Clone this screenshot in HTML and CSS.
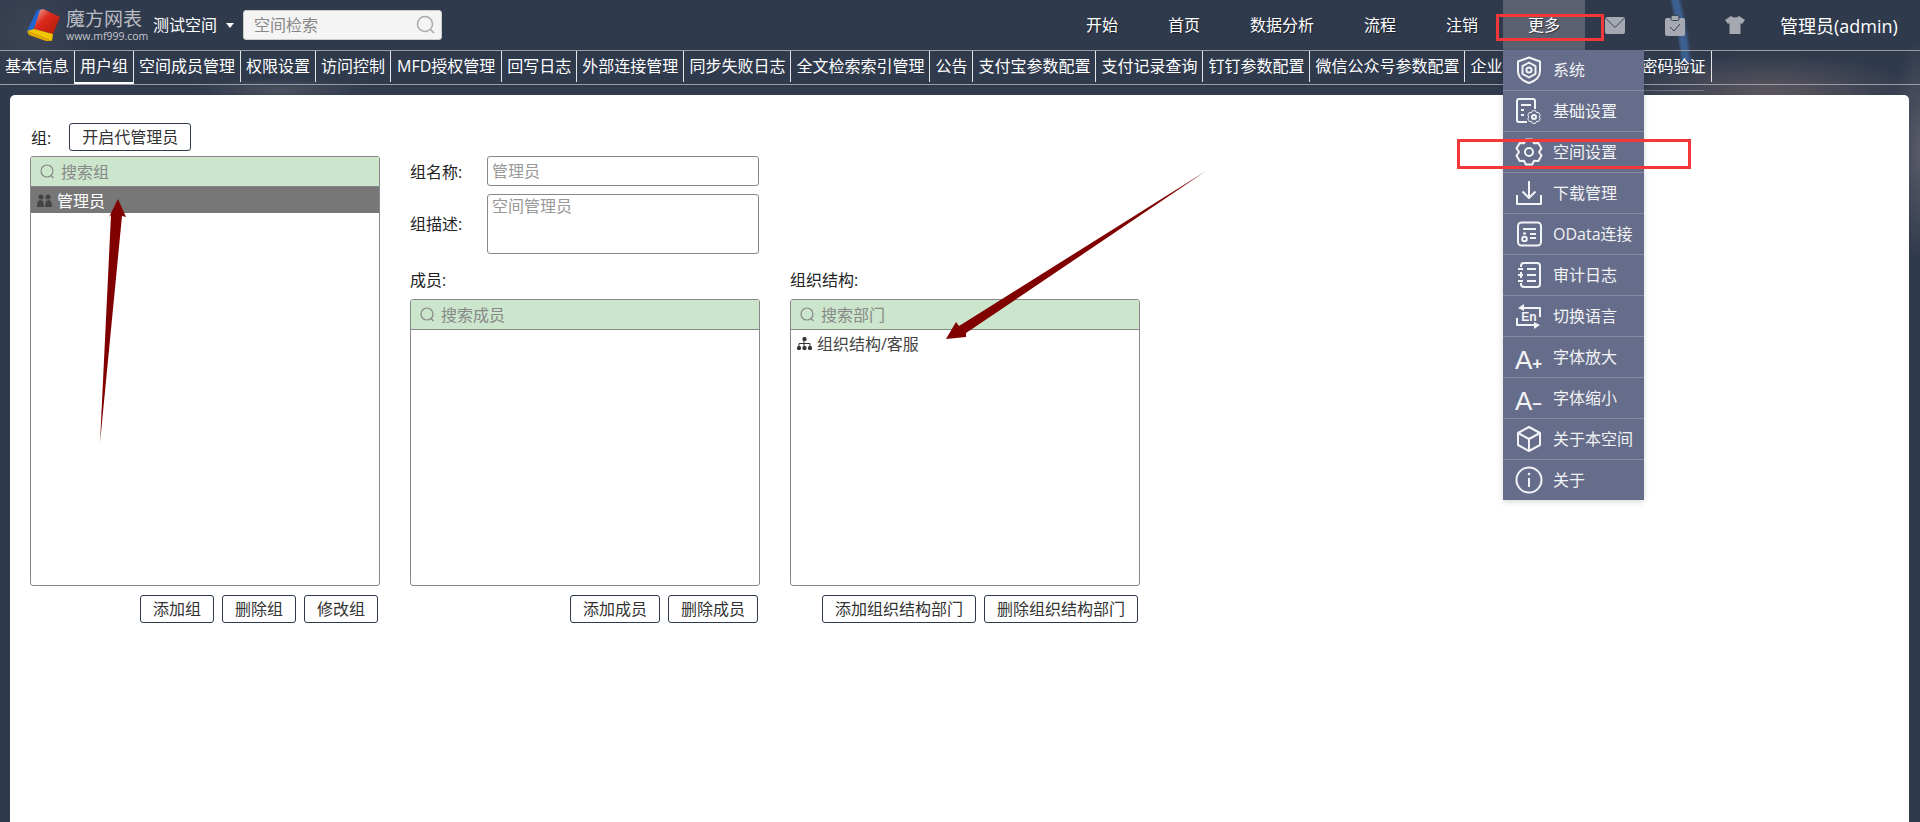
FILE: index.html
```html
<!DOCTYPE html>
<html lang="zh-CN">
<head>
    <meta charset="UTF-8">
    <title>空间设置 - 用户组</title>
    <link rel="stylesheet" href="styles.css">
</head>
<body>
    <!-- Top Bar -->
    <div class="top-bar">
        <div class="logo">
            <svg class="logo-cube" width="36" height="34" viewBox="0 0 36 34">
                <defs>
                    <linearGradient id="cubeRed" x1="0" y1="0" x2="1" y2="1">
                        <stop offset="0" stop-color="#eeb8b0"/>
                        <stop offset="0.4" stop-color="#dc2a1c"/>
                        <stop offset="1" stop-color="#b01808"/>
                    </linearGradient>
                </defs>
                <polygon points="1,23 11,2 17,1 8,21" fill="#1f66d0"/>
                <polygon points="14,2 17,1 34,9 27,26 8,21" fill="url(#cubeRed)"/>
                <polygon points="1,23 8,21 27,26 26,33" fill="#f2c400"/>
                <polygon points="1,23 26,33 20,33 3,27" fill="#e8a900"/>
            </svg>
            <div class="logo-text">
                <div class="logo-name">魔方网表</div>
                <div class="logo-url">www.mf999.com</div>
            </div>
        </div>
        <div class="space-name">测试空间<span class="caret"></span></div>
        <div class="space-search">
            <input type="text" placeholder="空间检索">
            <svg width="20" height="20" viewBox="0 0 20 20" fill="none" stroke="#aaa" stroke-width="1.5"><circle cx="9" cy="9" r="7.5"/><path d="M14.5 14.5 L18 18"/></svg>
        </div>

        <div class="nav">
            <div class="nav-item">开始</div>
            <div class="nav-item">首页</div>
            <div class="nav-item">数据分析</div>
            <div class="nav-item">流程</div>
            <div class="nav-item">注销</div>
            <div class="nav-item nav-more">更多
                <!-- More Menu -->
                <ul class="more-menu">
                    <li>
                        <svg class="menu-icon" viewBox="0 0 28 28"><path d="M14 1.5 L25 5.5 V15 C25 21 20 25 14 27 C8 25 3 21 3 15 V5.5 Z"/><polygon points="14,6.5 20.5,10.2 20.5,17.8 14,21.5 7.5,17.8 7.5,10.2"/><circle cx="14" cy="14" r="2.6"/></svg>
                        系统
                    </li>
                    <li>
                        <svg class="menu-icon" viewBox="0 0 28 28"><path d="M12 25 H4 Q2 25 2 23 V4 Q2 2 4 2 H18 Q20 2 20 4 V12"/><path d="M6 8 H16 M6 13 H9 M6 18 H9"/><polygon transform="translate(12 13) scale(0.5)" points="10.9,1.4 17.1,1.4 19,5.3 23.35,4.97 26.5,10.42 24,14 26.5,17.58 23.35,23.03 19,22.7 17.1,26.6 10.9,26.6 9,22.7 4.65,23.03 1.5,17.58 4,14 1.5,10.42 4.65,4.97 9,5.3"/><circle cx="19" cy="20" r="2"/></svg>
                        基础设置
                    </li>
                    <li>
                        <svg class="menu-icon" viewBox="0 0 28 28"><polygon points="10.9,1.4 17.1,1.4 19,5.3 23.35,4.97 26.5,10.42 24,14 26.5,17.58 23.35,23.03 19,22.7 17.1,26.6 10.9,26.6 9,22.7 4.65,23.03 1.5,17.58 4,14 1.5,10.42 4.65,4.97 9,5.3"/><circle cx="14" cy="14" r="4"/></svg>
                        空间设置
                    </li>
                    <li>
                        <svg class="menu-icon" viewBox="0 0 28 28"><path d="M14 2 V19 M7.5 12.5 L14 19 L20.5 12.5"/><path d="M2 16 V25 H26 V16"/></svg>
                        下载管理
                    </li>
                    <li>
                        <svg class="menu-icon" viewBox="0 0 28 28"><rect x="3" y="2.500" width="23" height="23" rx="3.500"/><path d="M8 9 H21 M15 14 H21 M15 18 H21 M8 13.500 H11"/><circle cx="9.500" cy="19" r="2.300"/></svg>
                        OData连接
                    </li>
                    <li>
                        <svg class="menu-icon" viewBox="0 0 28 28"><path d="M6 6 V5 Q6 2 9 2 H22 Q25 2 25 5 V23 Q25 26 22 26 H9 Q6 26 6 23 V22 M6 11 V17"/><path d="M3 8 H8 M3 20 H8 M3 14 H8 M12 8 H21 M12 14 H21 M12 20 H21"/></svg>
                        审计日志
                    </li>
                    <li>
                        <svg class="menu-icon" viewBox="0 0 28 28"><path d="M8 6 H25 V15"/><polygon class="solid" points="9,2 9,9 3,6"/><path d="M2 16 V23 H19"/><polygon class="solid" points="19,20 19,27 25,23"/><text x="14" y="19" text-anchor="middle" class="en-mark">En</text></svg>
                        切换语言
                    </li>
                    <li>
                        <span class="menu-icon font-mark">A<small>+</small></span>
                        字体放大
                    </li>
                    <li>
                        <span class="menu-icon font-mark">A<small>−</small></span>
                        字体缩小
                    </li>
                    <li>
                        <svg class="menu-icon" viewBox="0 0 28 28"><path d="M14 2 L25 8 V20 L14 26 L3 20 V8 Z"/><path d="M3 8 L14 14 L25 8 M14 14 V26"/></svg>
                        关于本空间
                    </li>
                    <li>
                        <svg class="menu-icon" viewBox="0 0 28 28"><circle cx="14" cy="14" r="12.500"/><path d="M14 12 V21"/><circle class="solid" cx="14" cy="8" r="1.300"/></svg>
                        关于
                    </li>
                </ul>
            </div>
        </div>

        <div class="tool-icons">
            <svg width="20" height="17" viewBox="0 0 20 17"><rect width="20" height="17" rx="2" fill="#a6a9b1"/><path d="M0.500 1 L10 10.500 L19.500 1" fill="none" stroke="#3a4356" stroke-width="1"/></svg>
            <svg width="20" height="21" viewBox="0 0 20 21"><rect y="3" width="20" height="18" rx="2" fill="#a6a9b1"/><rect x="6" y="0.500" width="8" height="5" rx="1.500" fill="#a6a9b1" stroke="#3a4356" stroke-width="1"/><path d="M5 12 L9 16 L15 9" fill="none" stroke="#3a4356" stroke-width="1"/></svg>
            <svg width="20" height="18" viewBox="0 0 20 18"><path d="M6 0 Q10 3 14 0 L20 4 L17 8 L15.500 7 V18 H4.500 V7 L3 8 L0 4 Z" fill="#a6a9b1"/></svg>
        </div>
        <div class="user-name">管理员(admin)</div>
    </div>

    <!-- Tabs -->
    <div class="tabs">
        <div class="tab">基本信息</div>
        <div class="tab tab-active">用户组</div>
        <div class="tab">空间成员管理</div>
        <div class="tab">权限设置</div>
        <div class="tab">访问控制</div>
        <div class="tab tab-mfd">MFD授权管理</div>
        <div class="tab">回写日志</div>
        <div class="tab">外部连接管理</div>
        <div class="tab">同步失败日志</div>
        <div class="tab">全文检索索引管理</div>
        <div class="tab">公告</div>
        <div class="tab">支付宝参数配置</div>
        <div class="tab">支付记录查询</div>
        <div class="tab">钉钉参数配置</div>
        <div class="tab">微信公众号参数配置</div>
        <div class="tab">企业微信参数配置</div>
        <div class="tab">短信密码验证</div>
    </div>
    <div class="tabs-track"></div>

    <!-- Main Content -->
    <div class="card">
        <div class="group-col">
            <div class="group-head">
                <span class="field-label">组:</span>
                <button class="btn">开启代管理员</button>
            </div>
            <div class="list-box">
                <div class="list-search">
                    <svg class="search-icon" width="15" height="15" viewBox="0 0 15 15"><circle cx="7" cy="7" r="6"/><path d="M11 11.500 L13.500 14"/></svg>
                    <input type="text" placeholder="搜索组">
                </div>
                <div class="list-row list-row-selected">
                    <svg width="15" height="13" viewBox="0 0 15 13" fill="#444"><circle cx="4" cy="3" r="2.500"/><circle cx="11" cy="3" r="2.500"/><path d="M0 13 Q0 6 3.500 6 Q7 6 7 13 Z M8 13 Q8 6 11.500 6 Q15 6 15 13 Z"/></svg>
                    管理员
                </div>
            </div>
            <div class="btn-row">
                <button class="btn">添加组</button>
                <button class="btn">删除组</button>
                <button class="btn">修改组</button>
            </div>
        </div>

        <div class="detail-col">
            <div class="form-row">
                <label class="field-label">组名称:</label>
                <input class="text-input" type="text" placeholder="管理员">
            </div>
            <div class="form-row form-row-area">
                <label class="field-label">组描述:</label>
                <textarea class="text-area" placeholder="空间管理员"></textarea>
            </div>

            <div class="lists">
                <div class="list-col">
                    <div class="list-title">成员:</div>
                    <div class="list-box">
                        <div class="list-search">
                            <svg class="search-icon" width="15" height="15" viewBox="0 0 15 15"><circle cx="7" cy="7" r="6"/><path d="M11 11.500 L13.500 14"/></svg>
                            <input type="text" placeholder="搜索成员">
                        </div>
                    </div>
                    <div class="btn-row">
                        <button class="btn">添加成员</button>
                        <button class="btn">删除成员</button>
                    </div>
                </div>
                <div class="list-col">
                    <div class="list-title">组织结构:</div>
                    <div class="list-box">
                        <div class="list-search">
                            <svg class="search-icon" width="15" height="15" viewBox="0 0 15 15"><circle cx="7" cy="7" r="6"/><path d="M11 11.500 L13.500 14"/></svg>
                            <input type="text" placeholder="搜索部门">
                        </div>
                        <div class="list-row">
                            <svg width="15" height="13" viewBox="0 0 15 13" fill="#333"><rect x="5.500" y="0" width="4" height="4" rx="1.500"/><rect x="0" y="9" width="4" height="4" rx="1.500"/><rect x="5.500" y="9" width="4" height="4" rx="1.500"/><rect x="11" y="9" width="4" height="4" rx="1.500"/><path d="M7 4 V9 M2 9 V6.500 H13 V9" fill="none" stroke="#333"/></svg>
                            组织结构/客服
                        </div>
                    </div>
                    <div class="btn-row">
                        <button class="btn">添加组织结构部门</button>
                        <button class="btn">删除组织结构部门</button>
                    </div>
                </div>
            </div>
        </div>
    </div>

    <!-- Screenshot annotations -->
    <div class="mark mark-more"></div>
    <div class="mark mark-space"></div>
    <svg class="arrows" width="1920" height="822" viewBox="0 0 1920 822">
        <polygon points="118,199 126,217 122,216 100,443 111,215 109,217" fill="#800000"/>
        <polygon points="946,339 956,322 959,326 1206,171 966,333 966,337" fill="#800000"/>
    </svg>
</body>
</html>
```

FILE: styles.css
```css
/* General Styles */
html, body {
    height: 100%;
}

body {
    margin: 0;
    height: 822px;
    overflow: hidden;
    position: relative;
    font-family: 'Open Sans', 'Noto Sans CJK SC', sans-serif;
    font-size: 16px;
    color: #333;
    background-color: #303a4d;
    background-repeat: no-repeat;
    background-image:
        radial-gradient(ellipse 150px 38px at 1770px 92px, rgba(120, 105, 105, 0.6), transparent),
        radial-gradient(ellipse 30px 110px at 1920px 150px, rgba(125, 120, 125, 0.55), transparent),
        radial-gradient(circle at -360px 100px, transparent 402px, #3b5f8f 405px, #3b5f8f 410px, transparent 414px),
        radial-gradient(ellipse 90px 12px at 280px 90px, rgba(110, 110, 115, 0.45), transparent),
        radial-gradient(ellipse 60px 60px at 30px 30px, rgba(90, 90, 100, 0.3), transparent);
    background-size: 100% 100%, 100% 100%, 100px 62px, 100% 100%, 100% 100%;
    background-position: 0 0, 0 0, 1640px 0, 0 0, 0 0;
}

/* Top Bar */
.top-bar {
    display: flex;
    align-items: center;
    height: 50px;
    padding-right: 20px;
    color: #fff;
}

.logo {
    display: flex;
    align-items: center;
    gap: 4px;
    margin-left: 26px;
    width: 127px;
}

.logo-cube {
    flex: none;
}

.logo-text {
    white-space: nowrap;
}

.logo-name {
    font-size: 19px;
    line-height: 22px;
    color: #b9bcc2;
}

.logo-url {
    font-size: 10.5px;
    line-height: 12px;
    color: #c4c6cb;
}

.space-name {
    display: flex;
    align-items: center;
    line-height: 24px;
    white-space: nowrap;
}

.caret {
    margin-left: 9px;
    border-left: 4.5px solid transparent;
    border-right: 4.5px solid transparent;
    border-top: 5px solid #fff;
}

.space-search {
    display: flex;
    align-items: center;
    width: 199px;
    height: 30px;
    margin-left: 9px;
    box-sizing: border-box;
    padding: 0 5px 0 10px;
    background: #f4f4f4;
    border: 1px solid #ccc;
    border-radius: 3px;
}

.space-search input {
    flex: 1;
    min-width: 0;
    border: none;
    background: none;
    padding: 0;
    font: inherit;
    outline: none;
}

.space-search input::placeholder {
    color: #888;
}

.nav {
    display: flex;
    margin-left: auto;
    height: 50px;
}

.nav-item {
    position: relative;
    padding: 0 25px;
    line-height: 50px;
    white-space: nowrap;
    text-shadow: 1px 1px 1px rgba(0, 0, 0, 0.45);
}

.nav-more {
    background: #5b6071;
}

.tool-icons {
    display: flex;
    align-items: center;
    gap: 40px;
    margin-left: 20px;
}

.user-name {
    width: 120px;
    margin-left: 35px;
    font-size: 18px;
    white-space: nowrap;
}

/* More Menu */
.more-menu {
    position: absolute;
    top: 50px;
    left: 0;
    z-index: 5;
    width: 141px;
    margin: 0;
    padding: 0;
    list-style: none;
    background: #666d8a;
    box-shadow: 0 2px 6px rgba(0, 0, 0, 0.15);
    text-shadow: none;
}

.more-menu li {
    display: flex;
    align-items: center;
    gap: 10px;
    height: 40px;
    padding-left: 12px;
    line-height: 40px;
    border-bottom: 1px solid #858aa3;
    font-size: 16px;
    color: #f2f3f6;
}

.more-menu li:last-child {
    border-bottom: none;
}

.menu-icon {
    flex: none;
    width: 28px;
    height: 28px;
    fill: none;
    stroke: #f2f3f6;
    stroke-width: 2;
    stroke-linejoin: round;
}

.menu-icon .solid {
    fill: #f2f3f6;
    stroke: none;
}

.en-mark {
    font-family: 'Liberation Sans', sans-serif;
    font-size: 12px;
    font-weight: bold;
    fill: #f2f3f6;
    stroke: none;
}

.font-mark {
    font-family: 'Liberation Sans', sans-serif;
    font-size: 26px;
    line-height: 28px;
    white-space: nowrap;
    margin-top: 6px;
}

.font-mark small {
    font-size: 17px;
    font-weight: bold;
}

/* Tabs */
.tabs {
    display: flex;
    height: 31px;
    padding-bottom: 2px;
    border-top: 1px solid #999ca4;
    border-bottom: 1px solid #999ca4;
    box-sizing: content-box;
    color: #fff;
}

.tab {
    padding: 0 5px;
    line-height: 31px;
    border-right: 1px solid #e4e5e8;
    white-space: nowrap;
}

.tab-active {
    margin-bottom: -2px;
    border-left: 1px solid #e4e5e8;
    border-bottom: 2px solid #fff;
    margin-left: -1px;
}

.tab-mfd {
    padding: 0 6px;
}

.tabs-track {
    position: absolute;
    top: 90px;
    left: 1644px;
    width: 60px;
    height: 1px;
    background: rgba(255, 255, 255, 0.25);
}

/* Content Area */
.card {
    display: flex;
    gap: 30px;
    box-sizing: border-box;
    height: 728px;
    margin: 10px 11px 0 10px;
    padding: 28px 20px 0;
    background: #fff;
    border-radius: 5px 5px 0 0;
}

.group-col {
    display: flex;
    flex-direction: column;
    width: 350px;
}

.group-head {
    display: flex;
    align-items: center;
    gap: 18px;
    height: 28px;
    margin-bottom: 5px;
    padding-left: 1px;
}

.field-label {
    color: #222;
    white-space: nowrap;
}

.btn {
    height: 28px;
    padding: 0 12px;
    font: inherit;
    line-height: 24px;
    color: #333;
    background: #fff;
    border: 1px solid #2f3a4d;
    border-radius: 3px;
}

.btn-row {
    display: flex;
    justify-content: flex-end;
    gap: 8px;
    margin-top: 9px;
    padding-right: 2px;
}

/* List Boxes */
.list-box {
    box-sizing: border-box;
    width: 350px;
    border: 1px solid #888;
    border-radius: 3px;
    overflow: hidden;
}

.group-col .list-box {
    height: 430px;
}

.list-col .list-box {
    height: 287px;
}

.list-search {
    display: flex;
    align-items: center;
    gap: 6px;
    height: 29px;
    padding-left: 9px;
    background: #cbe6cc;
    border-bottom: 1px solid #888;
}

.search-icon {
    flex: none;
    fill: none;
    stroke: #888;
    stroke-width: 1.2;
}

.list-search input {
    flex: 1;
    min-width: 0;
    padding: 0;
    border: none;
    background: none;
    outline: none;
    font: inherit;
}

.list-search input::placeholder {
    color: #888;
}

.list-row {
    display: flex;
    align-items: center;
    gap: 5px;
    height: 26px;
    padding-left: 6px;
    color: #444;
    white-space: nowrap;
}

.list-row-selected {
    background: #777;
    color: #fff;
}

/* Detail Form */
.detail-col {
    padding-top: 33px;
}

.form-row {
    display: flex;
    align-items: center;
    margin-bottom: 8px;
}

.form-row .field-label {
    width: 77px;
}

.form-row-area {
    align-items: flex-start;
}

.form-row-area .field-label {
    padding-top: 17px;
}

.text-input,
.text-area {
    box-sizing: border-box;
    width: 272px;
    padding: 0 4px;
    border: 1px solid #888;
    border-radius: 3px;
    font: inherit;
    outline: none;
    resize: none;
    display: block;
}

.text-input {
    height: 30px;
}

.text-area {
    height: 60px;
    line-height: 22px;
}

.text-input::placeholder,
.text-area::placeholder {
    color: #999;
}

.lists {
    display: flex;
    gap: 30px;
    margin-top: 6px;
}

.list-title {
    height: 24px;
    line-height: 24px;
    margin-bottom: 7px;
    margin-top: 6px;
    color: #222;
}

/* Annotations */
.mark {
    position: absolute;
    z-index: 10;
    box-sizing: border-box;
    border: 3px solid #f4383a;
}

.mark-more {
    left: 1496px;
    top: 14px;
    width: 108px;
    height: 27px;
}

.mark-space {
    left: 1457px;
    top: 139px;
    width: 234px;
    height: 30px;
}

.arrows {
    position: absolute;
    top: 0;
    left: 0;
    z-index: 11;
    pointer-events: none;
}
```
